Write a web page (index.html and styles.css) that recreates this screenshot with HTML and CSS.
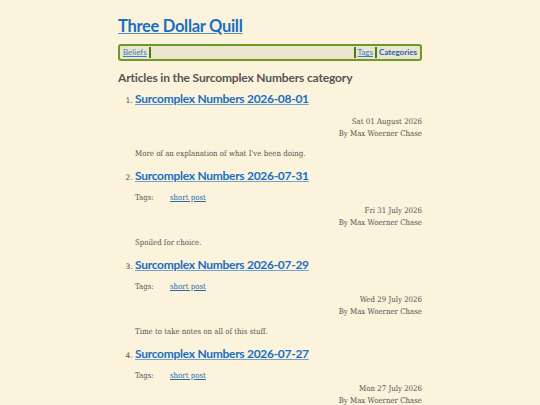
FILE: index.html
```html
<!DOCTYPE html>
<html lang="en">
<head>
<meta charset="utf-8">
<title>Three Dollar Quill</title>
<link rel="stylesheet" href="styles.css">
</head>
<body>
<div class="page">
  <header class="site-header">
    <h1 class="site-title"><a href="#">Three Dollar Quill</a></h1>
    <nav class="nav">
      <a href="#" class="nav-link nav-left">Beliefs</a>
      <span class="nav-fill"></span>
      <a href="#" class="nav-link nav-mid">Tags</a>
      <a href="#" class="nav-link nav-current">Categories</a>
    </nav>
  </header>
  <main>
    <h2 class="page-heading">Articles in the Surcomplex Numbers category</h2>
    <ol class="articles">
      <li class="article">
        <h3 class="article-title"><a href="#">Surcomplex Numbers 2026-08-01</a></h3>
        <div class="meta">
          <div>Sat 01 August 2026</div>
          <div>By Max Woerner Chase</div>
        </div>
        <p class="summary">More of an explanation of what I've been doing.</p>
      </li>
      <li class="article">
        <h3 class="article-title"><a href="#">Surcomplex Numbers 2026-07-31</a></h3>
        <div class="tags"><span class="tags-label">Tags:</span><a href="#">short post</a></div>
        <div class="meta">
          <div>Fri 31 July 2026</div>
          <div>By Max Woerner Chase</div>
        </div>
        <p class="summary">Spoiled for choice.</p>
      </li>
      <li class="article">
        <h3 class="article-title"><a href="#">Surcomplex Numbers 2026-07-29</a></h3>
        <div class="tags"><span class="tags-label">Tags:</span><a href="#">short post</a></div>
        <div class="meta">
          <div>Wed 29 July 2026</div>
          <div>By Max Woerner Chase</div>
        </div>
        <p class="summary">Time to take notes on all of this stuff.</p>
      </li>
      <li class="article">
        <h3 class="article-title"><a href="#">Surcomplex Numbers 2026-07-27</a></h3>
        <div class="tags"><span class="tags-label">Tags:</span><a href="#">short post</a></div>
        <div class="meta">
          <div>Mon 27 July 2026</div>
          <div>By Max Woerner Chase</div>
        </div>
        <p class="summary">More notes.</p>
      </li>
    </ol>
  </main>
</div>
</body>
</html>
```
FILE: styles.css
```css
html, body {
  margin: 0;
  padding: 0;
  background: #fbf3dc;
}
body {
  font-family: "DejaVu Serif Condensed", "DejaVu Serif", serif;
  color: #555;
}
.page {
  width: 304px;
  margin: 0 auto;
  padding-top: 15px;
}
.site-title {
  margin: 0;
  font-family: Lato, sans-serif;
  font-size: 16.5px;
  line-height: 22px;
  font-weight: 700;
  letter-spacing: -0.3px;
}
.site-title a {
  color: #1a6ec2;
  text-decoration-color: #4f8fd2;
}
.nav {
  margin-top: 7px;
  display: flex;
  align-items: stretch;
  border: 2px solid #6b9a27;
  border-radius: 3px;
  background: #ebe4cf;
  height: 11px;
  padding: 1px 1px;
  font-family: Lato, sans-serif;
  font-size: 8px;
  line-height: 11px;
}
.nav-link {
  color: #3a7cc4;
  padding: 0 2px;
}
.nav-left {
  border-right: 2px solid #4d7a18;
}
.nav-fill {
  flex: 1;
}
.nav-mid {
  border-left: 2px solid #4d7a18;
  border-right: 2px solid #4d7a18;
}
.nav-current {
  font-weight: 700;
  color: #2266aa;
  text-decoration: none;
}
.page-heading {
  margin: 9px 0 0;
  font-family: Lato, sans-serif;
  font-size: 12px;
  line-height: 16px;
  font-weight: 700;
  letter-spacing: -0.15px;
  color: #555;
}
.articles {
  margin: 5px 0 0;
  padding-left: 17px;
}
.article {
  font-size: 8px;
}
.article::marker {
  font-family: "DejaVu Sans", sans-serif;
  font-size: 7.5px;
  color: #555;
}
.article-title {
  margin: 0;
  font-family: Lato, sans-serif;
  font-size: 12px;
  line-height: 16px;
  font-weight: 700;
  letter-spacing: -0.28px;
}
.article-title a {
  color: #1a6ec2;
  text-decoration-color: #6ea2d8;
}
.tags {
  margin-top: 8px;
  font-size: 7.8px;
  line-height: 12px;
  display: flex;
}
.tags-label {
  width: 35px;
}
.tags a {
  color: #2a6bb0;
}
.meta {
  margin-top: 9px;
  text-align: right;
  font-size: 7.8px;
  line-height: 12px;
  color: #555;
}
.tags + .meta {
  margin-top: 1px;
}
.summary {
  margin: 8px 0 8px;
  font-size: 7.8px;
  line-height: 12px;
}
```
